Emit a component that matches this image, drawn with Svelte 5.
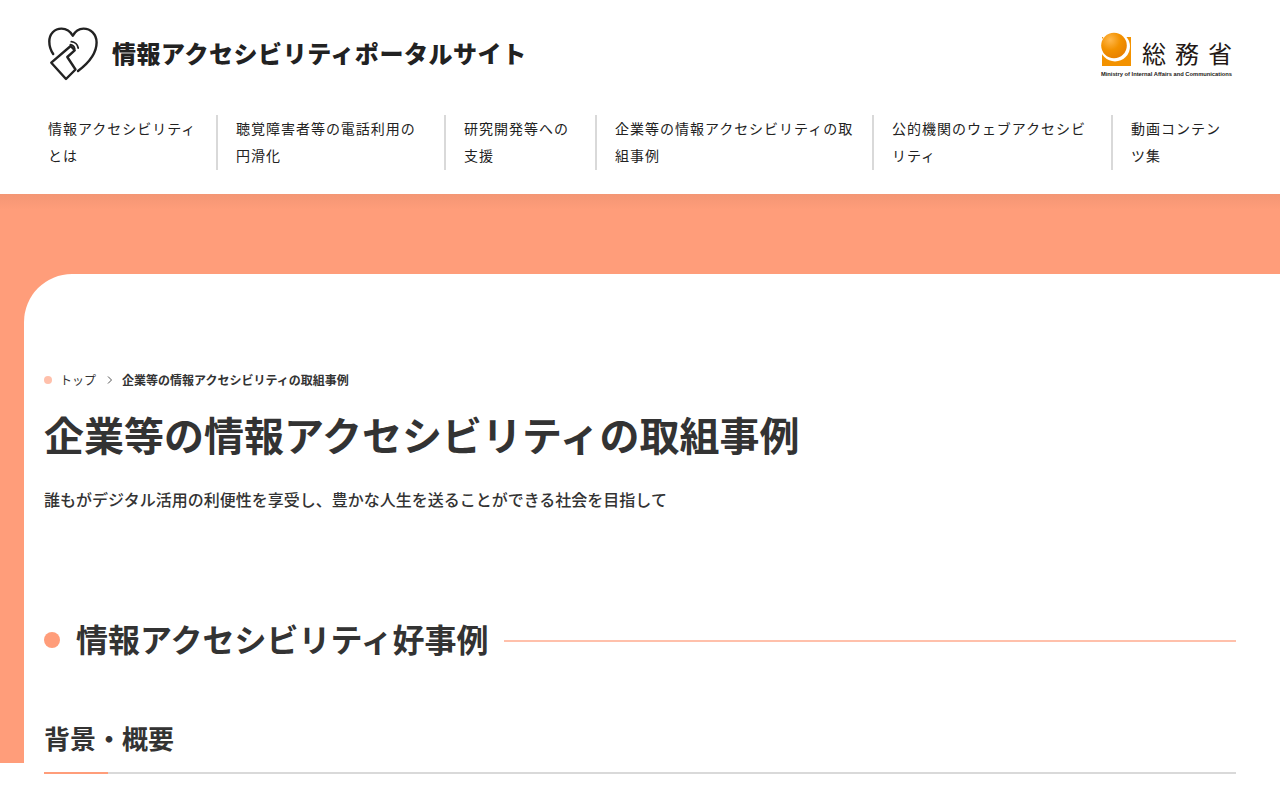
<script>
  const nav = [
    '情報アクセシビリティとは',
    '聴覚障害者等の電話利用の円滑化',
    '研究開発等への支援',
    '企業等の情報アクセシビリティの取組事例',
    '公的機関のウェブアクセシビリティ',
    '動画コンテンツ集'
  ];
</script>

<div class="page">
  <header class="header">
    <div class="brand">
      <svg class="mark" viewBox="0 0 50 54" width="50" height="54" fill="none" stroke="#222" stroke-width="2.4" stroke-linecap="round" stroke-linejoin="round">
        <path d="M30 44 C38 38 48.6 28 48.6 15.5 C48.6 7 42.5 1.6 35.5 1.6 C30.5 1.6 27 4.5 24.8 8.8 C22.5 4.5 18.5 1.6 13.5 1.6 C6.5 1.6 1.3 7 1.3 14.5 C1.3 19 2.8 23.5 5.2 27"/>
        <path d="M3.3 35.7 L22.7 19 L26.7 23.3 L19.3 30 L27.5 42.5 L18 52 Z"/>
        <path d="M22.4 17.7 C24.4 17.9 26.2 19.6 26.7 21.7" stroke-width="1.8"/>
        <path d="M23.3 14.7 C26.8 14.9 29.6 17.6 30.2 21" stroke-width="1.8"/>
      </svg>
      <span class="site-name">情報アクセシビリティポータルサイト</span>
    </div>
    <div class="soumu">
      <svg class="ball" viewBox="0 0 31 34" width="31" height="34">
        <defs>
          <radialGradient id="sph" cx="0.35" cy="0.28" r="0.8">
            <stop offset="0" stop-color="#ffb84d"/>
            <stop offset="0.5" stop-color="#f39200"/>
            <stop offset="1" stop-color="#e67e00"/>
          </radialGradient>
        </defs>
        <rect x="1" y="5" width="29" height="29" fill="#f39200"/>
        <circle cx="14" cy="14.5" r="15" fill="#fff"/>
        <circle cx="13" cy="13.5" r="12.8" fill="url(#sph)"/>
      </svg>
      <div class="soumu-text">
        <span class="soumu-ja">総務省</span>
        <span class="soumu-en">Ministry of Internal Affairs and Communications</span>
      </div>
    </div>
  </header>

  <nav class="gnav">
    {#each nav as item}
      <a href="#top" class="gnav-item">{item}</a>
    {/each}
  </nav>

  <main class="main">
    <div class="card">
      <ol class="crumbs">
        <li class="crumb-home">トップ</li>
        <li class="crumb-sep" aria-hidden="true">
          <svg viewBox="0 0 6 8" width="6" height="8" fill="none" stroke="#555" stroke-width="1"><path d="M1 .5 4.5 4 1 7.5"/></svg>
        </li>
        <li class="crumb-current">企業等の情報アクセシビリティの取組事例</li>
      </ol>
      <h1>企業等の情報アクセシビリティの取組事例</h1>
      <p class="lead">誰もがデジタル活用の利便性を享受し、豊かな人生を送ることができる社会を目指して</p>
      <h2><span>情報アクセシビリティ好事例</span></h2>
      <h3>背景・概要</h3>
    </div>
  </main>
</div>

<style>
  :global(body) {
    margin: 0;
    background: #fff;
    color: #333;
    font-family: "Noto Sans CJK JP", "Noto Sans", sans-serif;
  }
  .page { height: 800px; overflow: hidden; }
  .header {
    display: flex;
    justify-content: space-between;
    align-items: flex-start;
    padding: 27px 48px 0;
    height: 88px;
  }
  .brand { display: flex; align-items: center; gap: 14px; }
  .mark { display: block; }
  .site-name {
    font-size: 24px;
    font-weight: 900;
    letter-spacing: .55px;
    color: #222;
    line-height: 54px;
    position: relative;
    top: -1px;
  }
  .soumu { display: flex; gap: 10px; margin-top: 5px; }
  .ball { display: block; }
  .soumu-text { display: flex; flex-direction: column; align-items: flex-end; margin-left: -41px; width: 131px; }
  .soumu-ja {
    font-size: 24px;
    line-height: 30px;
    letter-spacing: 9px;
    margin-top: 6px;
    margin-right: -9px;
    color: #231815;
  }
  .soumu-en {
    font-family: "Liberation Sans", sans-serif;
    font-size: 5.75px;
    font-weight: 700;
    line-height: 8px;
    margin-top: 2px;
    white-space: nowrap;
    color: #231815;
  }
  .gnav {
    display: grid;
    grid-template-columns: 168px 228px 151px 277px 239px 120px;
    padding: 0 48px;
    height: 79px;
    align-content: start;
  }
  .gnav-item {
    display: block;
    box-sizing: border-box;
    height: 55px;
    padding: 0 14px 0 18px;
    border-left: 2px solid #d9d9d9;
    color: #222;
    text-decoration: none;
    font-size: 14px;
    letter-spacing: .07em;
    line-height: 27px;
  }
  .gnav-item:first-child { border-left: 0; padding-left: 0; }
  .gnav-item:last-child { padding-right: 0; }
  .main {
    padding: 80px 0 0 24px;
    background:
      linear-gradient(rgba(90, 60, 40, .07), rgba(90, 60, 40, 0) 16px) no-repeat 0 0 / 100% 16px,
      linear-gradient(#ff9d7a, #ff9d7a) no-repeat 0 0 / 100% 569px;
  }
  .card {
    background: #fff;
    border-top-left-radius: 48px;
    padding: 96px 44px 0 20px;
    height: 600px;
  }
  .crumbs {
    list-style: none;
    margin: 0;
    padding: 0;
    display: flex;
    align-items: center;
    font-size: 12px;
    line-height: 20px;
  }
  .crumb-home { position: relative; padding-left: 16px; color: #333; }
  .crumb-home::before {
    content: "";
    position: absolute;
    left: 0;
    top: 6px;
    width: 8px;
    height: 8px;
    border-radius: 50%;
    background: #ffc0ab;
  }
  .crumb-sep { display: flex; margin: 0 9px 0 11px; }
  .crumb-current { font-weight: 700; }
  h1 {
    margin: 16px 0 0;
    font-size: 40px;
    font-weight: 700;
    line-height: 56px;
    color: #333;
  }
  .lead {
    margin: 25px 0 0;
    font-size: 16px;
    font-weight: 500;
    line-height: 24px;
  }
  h2 {
    display: flex;
    align-items: center;
    margin: 104px 0 0;
    font-size: 32px;
    font-weight: 700;
    line-height: 46px;
  }
  h2 span { padding-bottom: 4px; }
  h2::before {
    content: "";
    width: 16px;
    height: 16px;
    border-radius: 50%;
    background: #ff9d7a;
    margin-right: 16px;
  }
  h2::after {
    content: "";
    flex: 1;
    height: 2px;
    background: #ffc0ab;
    margin: 2px 0 0 16px;
  }
  h3 {
    position: relative;
    margin: 54px 0 0;
    padding-bottom: 15px;
    font-size: 26px;
    font-weight: 700;
    line-height: 38px;
    border-bottom: 2px solid #d9d9d9;
  }
  h3::after {
    content: "";
    position: absolute;
    left: 0;
    bottom: -2px;
    width: 64px;
    height: 2px;
    background: #ff9d7a;
  }
</style>
